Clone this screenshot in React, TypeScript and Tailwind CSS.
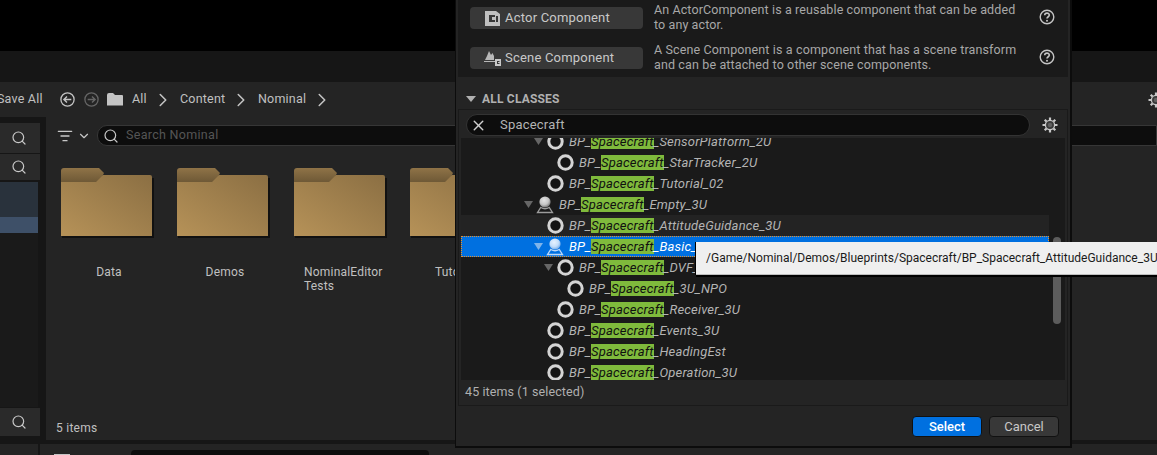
import React from "react";
import { Search, X, ChevronRight, ChevronDown, ListFilter } from "lucide-react";

function Ring() {
  return (
    <svg width="17" height="17" viewBox="0 0 17 17" className="shrink-0">
      <circle cx="8.5" cy="8.5" r="6.7" fill="#141414" stroke="#d4d4d4" strokeWidth="3" />
    </svg>
  );
}

function Actor({ selected, id }: { selected?: boolean; id: string }) {
  const hi = selected ? "#e6f2ff" : "#e4e4e4";
  const lo = selected ? "#5f9fe6" : "#5c5c5c";
  const base = selected ? "#bcd8f7" : "#9c9c9c";
  return (
    <svg width="18" height="18" viewBox="0 0 18 18" className="shrink-0">
      <defs>
        <radialGradient id={id} cx="0.42" cy="0.35" r="0.7">
          <stop offset="0" stopColor={hi} />
          <stop offset="0.55" stopColor={hi} stopOpacity="0.85" />
          <stop offset="1" stopColor={lo} />
        </radialGradient>
      </defs>
      <circle cx="9" cy="6" r="5.6" fill={"url(#" + id + ")"} />
      <path d="M4.8 11.5 Q9 14 13.2 11.5 L16.5 16.5 H1.5 Z" fill="none" stroke={base} strokeWidth="1.3" />
    </svg>
  );
}

function Gear({ size = 16 }: { size?: number }) {
  return (
    <svg width={size} height={size} viewBox="0 0 16 16" className="shrink-0">
      <g stroke="#c8c8c8" strokeWidth="2.2">
        <path d="M8 0.5V3M8 13V15.5M0.5 8H3M13 8H15.5M2.7 2.7L4.5 4.5M11.5 11.5L13.3 13.3M2.7 13.3L4.5 11.5M11.5 4.5L13.3 2.7" />
      </g>
      <circle cx="8" cy="8" r="4.6" fill="#3a3a3a" stroke="#c8c8c8" strokeWidth="1.3" />
      <circle cx="8" cy="8" r="2.2" fill="#616161" />
    </svg>
  );
}

function Help() {
  return (
    <svg width="16" height="16" viewBox="0 0 16 16" className="shrink-0">
      <circle cx="8" cy="8" r="6.8" fill="none" stroke="#c4c4c4" strokeWidth="1.4" />
      <path d="M5.7 6.2C5.8 3.4 10.3 3.4 10.3 6.1C10.3 7.8 8 7.7 8 9.6" fill="none" stroke="#c4c4c4" strokeWidth="1.6" />
      <circle cx="8" cy="11.7" r="1" fill="#c4c4c4" />
    </svg>
  );
}

function NavCircle({ dir, color }: { dir: "l" | "r"; color: string }) {
  return (
    <svg width="15" height="15" viewBox="0 0 15 15" className="shrink-0">
      <circle cx="7.5" cy="7.5" r="6.6" fill="none" stroke={color} strokeWidth="1.3" />
      {dir === "l" ? (
        <path d="M11.3 7.5H4M7 4.4L3.9 7.5L7 10.6" fill="none" stroke={color} strokeWidth="1.4" />
      ) : (
        <path d="M3.7 7.5H11M8 4.4L11.1 7.5L8 10.6" fill="none" stroke={color} strokeWidth="1.4" />
      )}
    </svg>
  );
}

function Folder({ id }: { id: string }) {
  return (
    <svg width="94" height="72" viewBox="0 0 94 72" className="shrink-0">
      <defs>
        <linearGradient id={id} x1="0" y1="1" x2="1" y2="0">
          <stop offset="0" stopColor="#b69258" />
          <stop offset="1" stopColor="#8b6f43" />
        </linearGradient>
        <linearGradient id={id + "t"} x1="0" y1="0" x2="0" y2="1">
          <stop offset="0" stopColor="#8f7347" />
          <stop offset="1" stopColor="#6c5735" />
        </linearGradient>
      </defs>
      <path d="M1 14V3Q1 0 4 0H39L44 5L39 15H1Z" fill={"url(#" + id + "t)"} />
      <path d="M1 68V14H36L43 7H90Q92 7 92 9V68Z" fill={"url(#" + id + ")"} />
      <path d="M2 69H93V10" fill="none" stroke="#111" strokeWidth="2" />
    </svg>
  );
}

type RowData = {
  level: number;
  arrow?: boolean;
  actor?: boolean;
  name: string;
  selected?: boolean;
  hovered?: boolean;
};

const rows: RowData[] = [
  { level: 2, arrow: true, name: "_SensorPlatform_2U" },
  { level: 3, name: "_StarTracker_2U" },
  { level: 2, name: "_Tutorial_02" },
  { level: 1, arrow: true, actor: true, name: "_Empty_3U" },
  { level: 2, name: "_AttitudeGuidance_3U", hovered: true },
  { level: 2, arrow: true, actor: true, name: "_Basic_3U", selected: true },
  { level: 3, arrow: true, name: "_DVF_3U" },
  { level: 4, name: "_3U_NPO" },
  { level: 3, name: "_Receiver_3U" },
  { level: 2, name: "_Events_3U" },
  { level: 2, name: "_HeadingEst" },
  { level: 2, name: "_Operation_3U" },
];

const indent: Record<number, string> = {
  1: "pl-[63px]",
  2: "pl-[73px]",
  3: "pl-[83px]",
  4: "pl-[93px]",
};

function TreeRow({ r, i }: { r: RowData; i: number }) {
  const bg = r.selected
    ? "bg-[#0070e0] outline-1 outline-dotted -outline-offset-1 outline-[#e8922a]"
    : r.hovered
    ? "bg-[#232323]"
    : "";
  return (
    <div className={"flex h-[21px] shrink-0 items-center " + indent[r.level] + " " + bg}>
      <div className="flex w-[8px] shrink-0 justify-center">
        {r.arrow && (
          <svg width="9" height="7" viewBox="0 0 9 7" className="shrink-0">
            <path d="M0 0H9L4.5 7Z" fill={r.selected ? "#7fb4ea" : "#666666"} />
          </svg>
        )}
      </div>
      <div className="ml-[5px] flex w-[16px] shrink-0 justify-center">
        {r.actor ? <Actor selected={r.selected} id={"actor" + i} /> : <Ring />}
      </div>
      <div className={"ml-[6px] flex items-center whitespace-nowrap text-[13px] italic tracking-[0.18px] " + (r.selected ? "text-white" : "text-[#b4b4b4]")}>
        <span>BP_</span>
        <span className="flex h-[15px] items-center bg-[#7fba3c] text-[#101010]">Spacecraft</span>
        <span>{r.name}</span>
      </div>
    </div>
  );
}

function SideSearch({ className }: { className: string }) {
  return (
    <div className={"flex items-center justify-end bg-[#2a2a2a] pr-[13px] " + className}>
      <Search size={16} color="#c8c8c8" strokeWidth={1.8} />
    </div>
  );
}

export default function App() {
  return (
    <div className="relative flex h-[455px] w-[1157px] flex-col overflow-hidden bg-black text-[13px] font-['Roboto',sans-serif] text-[#c0c0c0]">
      <div className="h-[51px] shrink-0 bg-black" />
      <div className="h-[31px] shrink-0 bg-[#161616]" />

      {/* Toolbar */}
      <div className="flex h-[35px] shrink-0 items-center bg-[#242424] text-[12.5px] tracking-[0.2px]">
        <span className="ml-[-3px] w-[63px] whitespace-nowrap">Save All</span>
        <NavCircle dir="l" color="#c4c4c4" />
        <span className="w-[9px]" />
        <NavCircle dir="r" color="#666666" />
        <svg width="17" height="13" viewBox="0 0 17 13" className="ml-[8px] shrink-0">
          <path d="M0 2Q0 0 2 0H6L8 2H15Q16 2 16 3V12.5H0Z" fill="#c4c4c4" />
        </svg>
        <span className="ml-[8px] w-[20px]">All</span>
        <ChevronRight size={22} color="#c4c4c4" strokeWidth={1.7} />
        <span className="ml-[6px] w-[50px]">Content</span>
        <ChevronRight size={22} color="#c4c4c4" strokeWidth={1.7} />
        <span className="ml-[6px] w-[53px]">Nominal</span>
        <ChevronRight size={22} color="#c4c4c4" strokeWidth={1.7} />
        <div className="ml-auto mr-[-7px]">
          <Gear />
        </div>
      </div>

      {/* Content */}
      <div className="flex h-[323px] shrink-0 bg-[#161616]">
        <div className="flex w-[40px] shrink-0 flex-col pt-[6px]">
          <SideSearch className="h-[30px] shrink-0" />
          <SideSearch className="mt-[1px] h-[26px] shrink-0" />
          <div className="mt-[2px] flex w-[38px] flex-1 flex-col bg-[#1a1a1a]">
            <div className="h-[35px] bg-[#29323c]" />
            <div className="h-[16px] bg-[#3e5068]" />
          </div>
          <SideSearch className="mt-[1px] h-[28px] shrink-0" />
          <div className="h-[4px]" />
        </div>
        <div className="ml-[6px] flex flex-1 flex-col overflow-hidden bg-[#242424]">
          <div className="mt-[8px] flex h-[21px] shrink-0 items-center pl-[11px]">
            <ListFilter size={16} color="#c8c8c8" strokeWidth={2} />
            <ChevronDown size={14} color="#c8c8c8" strokeWidth={2} className="ml-[4px]" />
            <div className="ml-[6px] flex h-[21px] flex-1 items-center rounded-l-[10px] border border-[#363636] bg-[#0d0d0d] pl-[5px] text-[12.5px] tracking-[0.3px] text-[#555555]">
              <Search size={16} color="#c8c8c8" strokeWidth={1.8} />
              <span className="ml-[7px]">Search Nominal</span>
            </div>
          </div>
          <div className="mt-[22px] flex flex-1 items-start text-[12px] tracking-[0.2px]">
            <div className="ml-[14px] flex w-[116px] shrink-0 flex-col items-start">
              <Folder id="fa" />
              <div className="mt-[23px] w-[98px] text-center">Data</div>
            </div>
            <div className="flex w-[117px] shrink-0 flex-col items-start">
              <Folder id="fb" />
              <div className="mt-[23px] w-[98px] text-center">Demos</div>
            </div>
            <div className="flex w-[116px] shrink-0 flex-col items-start">
              <Folder id="fc" />
              <div className="ml-[11px] mt-[25px] leading-[14px]">
                NominalEditor
                <br />
                Tests
              </div>
            </div>
            <div className="flex w-[100px] shrink-0 flex-col items-start">
              <Folder id="fd" />
              <div className="ml-[26px] mt-[23px]">Tutorials</div>
            </div>
          </div>
          <div className="mb-[3px] ml-[10px] text-[12px] tracking-[0.25px]">5 items</div>
        </div>
      </div>

      {/* Bottom strip */}
      <div className="h-[4px] shrink-0 bg-[#161616]" />
      <div className="flex flex-1 gap-[2px] bg-[#161616]">
        <div className="w-[38px] bg-[#242424]" />
        <div className="flex flex-1 items-start bg-[#242424]">
          <div className="ml-[14px] mt-[10px] h-[1px] w-[16px] bg-[#c4c4c4]" />
          <div className="ml-[61px] mt-[6px] h-[5px] w-[298px] rounded-t-[4px] bg-[#0d0d0d]" />
        </div>
      </div>

      {/* Dialog */}
      <div className="absolute left-[455px] top-0 flex h-[448px] w-[617px] flex-col border-b-2 border-l border-r-2 border-[#0c0c0c] bg-[#242424]">
        <div className="mx-[2px] flex h-[77px] shrink-0 flex-col bg-[#1a1a1a]">
          <div className="flex h-[40px] items-center">
            <button className="relative top-[-2px] ml-[12px] flex h-[22px] w-[173px] items-center rounded-[4px] bg-[#383838] text-[13px] tracking-[0.2px] text-[#c8c8c8]">
              <svg width="15" height="15" viewBox="0 0 15 15" className="ml-[15px] shrink-0">
                <path d="M0 0H11L15 3V15H0Z M4 4V11H10V9H7V6H10V4Z M11 5V11H13V5Z" fill="#c0c0c0" fillRule="evenodd" />
              </svg>
              <span className="ml-[5px]">Actor Component</span>
            </button>
            <div className="relative top-[-3px] ml-[11px] w-[370px] whitespace-nowrap text-[12.5px] leading-[15px] tracking-[0.1px] text-[#a8a8a8]">
              An ActorComponent is a reusable component that can be added
              <br />
              to any actor.
            </div>
            <div className="relative top-[-3px] ml-[15px]">
              <Help />
            </div>
          </div>
          <div className="flex h-[37px] items-center">
            <button className="relative top-[-1px] ml-[12px] flex h-[22px] w-[173px] items-center rounded-[4px] bg-[#383838] text-[13px] tracking-[0.2px] text-[#c8c8c8]">
              <svg width="18" height="16" viewBox="0 0 18 16" className="ml-[14px] shrink-0">
                <path d="M5 1L7 5L8.5 3L10 6V10H1L3 6Z" fill="#b8b8b8" />
                <path d="M0 11H11V12H0Z" fill="#b8b8b8" />
                <path d="M11 9H17V16H11Z M13 11V14H15.5V13H14V12H15.5V11Z" fill="#c8c8c8" fillRule="evenodd" />
              </svg>
              <span className="ml-[3px]">Scene Component</span>
            </button>
            <div className="relative top-[-2px] ml-[11px] w-[370px] whitespace-nowrap text-[12.5px] leading-[15px] tracking-[0.13px] text-[#a8a8a8]">
              A Scene Component is a component that has a scene transform
              <br />
              and can be attached to other scene components.
            </div>
            <div className="relative top-[-2px] ml-[15px]">
              <Help />
            </div>
          </div>
        </div>

        <div className="flex h-[32px] shrink-0 items-center pl-[10px] pt-[11px]">
          <svg width="10" height="6" viewBox="0 0 10 6" className="shrink-0">
            <path d="M0 0H10L5 6Z" fill="#b0b0b0" />
          </svg>
          <span className="ml-[6px] text-[12px] font-bold tracking-[0.2px] text-[#b0b0b0]">ALL CLASSES</span>
        </div>

        <div className="mx-[2px] flex h-[297px] shrink-0 flex-col border border-[#1a1a1a] bg-[#242424]">
          <div className="flex h-[28px] shrink-0 items-center pt-[2px]">
            <div className="ml-[7px] flex h-[22px] w-[564px] items-center rounded-[11px] border border-[#333333] bg-[#0d0d0d]">
              <X size={17} color="#d0d0d0" strokeWidth={2} className="ml-[3px]" />
              <span className="ml-[13px] text-[13px] tracking-[0.2px] text-[#b4b4b4]">Spacecraft</span>
            </div>
            <div className="ml-[12px]">
              <Gear />
            </div>
          </div>
          <div className="mx-[2px] flex h-[242px] shrink-0 overflow-hidden bg-[#1a1a1a]">
            <div className="mt-[-7px] flex w-[588px] shrink-0 flex-col">
              {rows.map((r, i) => (
                <TreeRow key={i} r={r} i={i} />
              ))}
            </div>
            <div className="flex-1 pl-[4px] pt-[99px]">
              <div className="h-[87px] w-[8px] rounded-[4px] bg-[#5c5c5c]" />
            </div>
          </div>
          <div className="flex flex-1 items-center pl-[6px] text-[12.5px] tracking-[0.1px] text-[#b0b0b0]">
            45 items (1 selected)
          </div>
        </div>

        <div className="flex flex-1 items-start justify-end pr-[11px] pt-[10px]">
          <button className="flex h-[21px] w-[70px] items-center justify-center rounded-[4px] border border-[#111] bg-[#0070e0] text-[13px] font-medium text-white">
            Select
          </button>
          <button className="ml-[7px] flex h-[21px] w-[70px] items-center justify-center rounded-[4px] border border-[#111] bg-[#383838] text-[13px] text-[#c8c8c8]">
            Cancel
          </button>
        </div>
      </div>

      {/* Tooltip */}
      <div className="absolute left-[696px] top-[242px] flex h-[33px] w-[470px] items-center whitespace-nowrap border-b border-[#bdbdbd] bg-[#efefef] pl-[10px] text-[12px] text-[#1a1a1a] shadow-[0_2px_0_#000,-1px_0_0_#000]">
        /Game/Nominal/Demos/Blueprints/Spacecraft/BP_Spacecraft_AttitudeGuidance_3U
      </div>
    </div>
  );
}
